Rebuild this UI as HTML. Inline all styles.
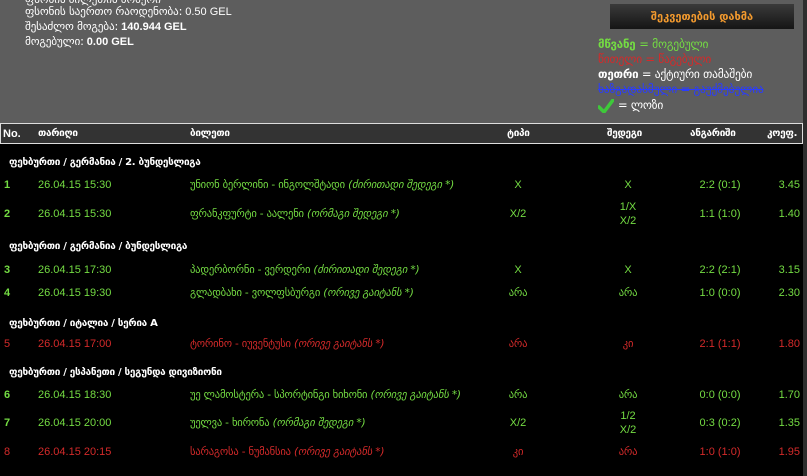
<!DOCTYPE html>
<html><head><meta charset="utf-8"><style>
*{margin:0;padding:0;box-sizing:border-box}
body{width:807px;height:476px;background:#000;position:relative;overflow:hidden;font-family:"Liberation Sans","DejaVu Sans",sans-serif;font-size:11px;color:#fff}
.t{position:absolute;white-space:nowrap;line-height:14px}
.g{color:#74dc43}.r{color:#d42a2a}.w{color:#fff}
.c{text-align:center;transform:translateX(-50%)}
.rt{transform:translateX(-100%)}
.ka{font-family:"DejaVu Sans",sans-serif;font-size:10.6px;letter-spacing:-0.2px}
.kb{font-family:"DejaVu Sans",sans-serif;font-size:10px;letter-spacing:-0.3px;font-weight:bold}
.kl{font-family:"DejaVu Sans",sans-serif;font-size:11.5px;letter-spacing:-0.2px}
.b{font-weight:bold}
i{font-style:italic}
</style></head><body>
<div style="position:absolute;left:0;top:0;width:803px;height:123px;background:#5d5d5d"></div>
<div style="position:absolute;left:803px;top:0;width:4px;height:476px;background:#2e2e2e"></div>
<div class="t" style="left:25px;top:-7px">ფსონის ბილეთის ნომერი</div>
<div class="t" style="left:25px;top:5px"><span class="ka" style="font-size:11.3px">ფსონის საერთო რაოდენობა:</span> 0.50 GEL</div>
<div class="t" style="left:25px;top:20px"><span class="ka" style="font-size:11.3px">შესაძლო მოგება:</span> <b>140.944 GEL</b></div>
<div class="t" style="left:25px;top:35px"><span class="ka" style="font-size:11.3px">მოგებული:</span> <b>0.00 GEL</b></div>
<div style="position:absolute;left:610px;top:4px;width:184px;height:25px;background:linear-gradient(#3a3a3a,#151515);color:#f39a2e;text-align:center;line-height:25px;font-family:'DejaVu Sans',sans-serif;font-size:11px;font-weight:bold">შეკვეთების დახმა</div>
<div class="t kl b g" style="left:598px;top:37px">მწვანე <span style="font-weight:normal">= მოგებული</span></div>
<div class="t kl r" style="left:598px;top:52px">წითელი = წაგებული</div>
<div class="t kl w" style="left:598px;top:67px"><b>თეთრი</b> = აქტიური თამაშები</div>
<div class="t kl" style="left:598px;top:82px;color:#2a3cff;text-decoration:line-through">ხაზგადასმული = გაუქმებულია</div>
<svg style="position:absolute;left:598px;top:99px" width="16" height="14" viewBox="0 0 16 14"><path d="M1 8 L6 13 L15 1" stroke="#3ec83a" stroke-width="3.5" fill="none" stroke-linecap="round" stroke-linejoin="round"/></svg>
<div class="t kl w" style="left:618px;top:98px">= ლოზი</div>
<div style="position:absolute;left:0;top:123px;width:803px;height:21px;background:#333;border:1px solid #ddd"></div>
<div class="t b" style="left:3px;top:127px">No.</div>
<div class="t kb" style="left:38px;top:127px">თარიღი</div>
<div class="t kb" style="left:190px;top:127px">ბილეთი</div>
<div class="t kb" style="left:507px;top:127px">ტიპი</div>
<div class="t kb" style="left:607px;top:127px">შედეგი</div>
<div class="t kb" style="left:690px;top:127px">ანგარიში</div>
<div class="t kb" style="left:767px;top:127px">კოეფ.</div>

<div class="t kb" style="left:9px;top:156px">ფეხბურთი / გერმანია / 2. ბუნდესლიგა</div>
<div class="t g b" style="left:4px;top:178px">1</div><div class="t g" style="left:38px;top:178px">26.04.15 15:30</div>
<div class="t g ka" style="left:190px;top:178px">უნიონ ბერლინი - ინგოლშტადი <i>(ძირითადი შედეგი *)</i></div>
<div class="t g c" style="left:518px;top:178px">X</div><div class="t g c" style="left:628px;top:178px">X</div>
<div class="t g c" style="left:720px;top:178px">2:2 (0:1)</div><div class="t g rt" style="left:800px;top:178px">3.45</div>

<div class="t g b" style="left:4px;top:207px">2</div><div class="t g" style="left:38px;top:207px">26.04.15 15:30</div>
<div class="t g ka" style="left:190px;top:207px">ფრანკფურტი - აალენი <i>(ორმაგი შედეგი *)</i></div>
<div class="t g c" style="left:518px;top:207px">X/2</div><div class="t g c" style="left:628px;top:200px">1/X</div><div class="t g c" style="left:628px;top:214px">X/2</div>
<div class="t g c" style="left:720px;top:207px">1:1 (1:0)</div><div class="t g rt" style="left:800px;top:207px">1.40</div>

<div class="t kb" style="left:9px;top:240px">ფეხბურთი / გერმანია / ბუნდესლიგა</div>
<div class="t g b" style="left:4px;top:263px">3</div><div class="t g" style="left:38px;top:263px">26.04.15 17:30</div>
<div class="t g ka" style="left:190px;top:263px">პადერბორნი - ვერდერი <i>(ძირითადი შედეგი *)</i></div>
<div class="t g c" style="left:518px;top:263px">X</div><div class="t g c" style="left:628px;top:263px">X</div>
<div class="t g c" style="left:720px;top:263px">2:2 (2:1)</div><div class="t g rt" style="left:800px;top:263px">3.15</div>

<div class="t g b" style="left:4px;top:286px">4</div><div class="t g" style="left:38px;top:286px">26.04.15 19:30</div>
<div class="t g ka" style="left:190px;top:286px">გლადბახი - ვოლფსბურგი <i>(ორივე გაიტანს *)</i></div>
<div class="t g c ka" style="left:518px;top:286px">არა</div><div class="t g c ka" style="left:628px;top:286px">არა</div>
<div class="t g c" style="left:720px;top:286px">1:0 (0:0)</div><div class="t g rt" style="left:800px;top:286px">2.30</div>

<div class="t kb" style="left:9px;top:317px">ფეხბურთი / იტალია / სერია A</div>
<div class="t r" style="left:4px;top:337px">5</div><div class="t r" style="left:38px;top:337px">26.04.15 17:00</div>
<div class="t r ka" style="left:190px;top:337px">ტორინო - იუვენტუსი <i>(ორივე გაიტანს *)</i></div>
<div class="t r c ka" style="left:518px;top:337px">არა</div><div class="t r c ka" style="left:628px;top:337px">კი</div>
<div class="t r c" style="left:720px;top:337px">2:1 (1:1)</div><div class="t r rt" style="left:800px;top:337px">1.80</div>

<div class="t kb" style="left:9px;top:366px">ფეხბურთი / ესპანეთი / სეგუნდა დივიზიონი</div>
<div class="t g b" style="left:4px;top:388px">6</div><div class="t g" style="left:38px;top:388px">26.04.15 18:30</div>
<div class="t g ka" style="left:190px;top:388px">უე ლამოსტერა - სპორტინგი ხიხონი <i>(ორივე გაიტანს *)</i></div>
<div class="t g c ka" style="left:518px;top:388px">არა</div><div class="t g c ka" style="left:628px;top:388px">არა</div>
<div class="t g c" style="left:720px;top:388px">0:0 (0:0)</div><div class="t g rt" style="left:800px;top:388px">1.70</div>

<div class="t g b" style="left:4px;top:416px">7</div><div class="t g" style="left:38px;top:416px">26.04.15 20:00</div>
<div class="t g ka" style="left:190px;top:416px">უელვა - ხირონა <i>(ორმაგი შედეგი *)</i></div>
<div class="t g c" style="left:518px;top:416px">X/2</div><div class="t g c" style="left:628px;top:409px">1/2</div><div class="t g c" style="left:628px;top:423px">X/2</div>
<div class="t g c" style="left:720px;top:416px">0:3 (0:2)</div><div class="t g rt" style="left:800px;top:416px">1.35</div>

<div class="t r" style="left:4px;top:445px">8</div><div class="t r" style="left:38px;top:445px">26.04.15 20:15</div>
<div class="t r ka" style="left:190px;top:445px">სარაგოსა - ნუმანსია <i>(ორივე გაიტანს *)</i></div>
<div class="t r c ka" style="left:518px;top:445px">კი</div><div class="t r c ka" style="left:628px;top:445px">არა</div>
<div class="t r c" style="left:720px;top:445px">1:0 (1:0)</div><div class="t r rt" style="left:800px;top:445px">1.95</div>
</body></html>
